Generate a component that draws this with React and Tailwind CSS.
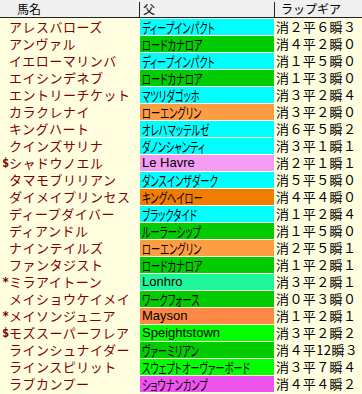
import React from 'react'

const rows = [
  { mark: '', name: 'アレスバローズ', sire: 'ディープインパクト', bg: 'bg-[#00ffff]', lap: '消２平６瞬３' },
  { mark: '', name: 'アンヴァル', sire: 'ロードカナロア', bg: 'bg-[#00cc00]', lap: '消４平２瞬０' },
  { mark: '', name: 'イエローマリンバ', sire: 'ディープインパクト', bg: 'bg-[#00ffff]', lap: '消１平５瞬０' },
  { mark: '', name: 'エイシンデネブ', sire: 'ロードカナロア', bg: 'bg-[#00cc00]', lap: '消１平３瞬０' },
  { mark: '', name: 'エントリーチケット', sire: 'マツリダゴッホ', bg: 'bg-[#00ffff]', lap: '消３平２瞬４' },
  { mark: '', name: 'カラクレナイ', sire: 'ローエングリン', bg: 'bg-[#ff9c44]', lap: '消３平２瞬０' },
  { mark: '', name: 'キングハート', sire: 'オレハマッテルゼ', bg: 'bg-[#00ffff]', lap: '消６平５瞬２' },
  { mark: '', name: 'クインズサリナ', sire: 'ダノンシャンティ', bg: 'bg-[#00ffff]', lap: '消３平１瞬１' },
  { mark: '$', name: 'シャドウノエル', sire: 'Le Havre', bg: 'bg-[#f49cf4]', lap: '消２平１瞬１', latin: true },
  { mark: '', name: 'タマモブリリアン', sire: 'ダンスインザダーク', bg: 'bg-[#00ffff]', lap: '消５平５瞬０' },
  { mark: '', name: 'ダイメイプリンセス', sire: 'キングヘイロー', bg: 'bg-[#f07c00]', lap: '消４平４瞬０' },
  { mark: '', name: 'ディープダイバー', sire: 'ブラックタイド', bg: 'bg-[#00ffff]', lap: '消１平２瞬４' },
  { mark: '', name: 'ディアンドル', sire: 'ルーラーシップ', bg: 'bg-[#00cc00]', lap: '消１平５瞬０' },
  { mark: '', name: 'ナインテイルズ', sire: 'ローエングリン', bg: 'bg-[#ff9c44]', lap: '消２平５瞬１' },
  { mark: '', name: 'ファンタジスト', sire: 'ロードカナロア', bg: 'bg-[#00cc00]', lap: '消１平２瞬１' },
  { mark: '*', name: 'ミラアイトーン', sire: 'Lonhro', bg: 'bg-[#1ef59c]', lap: '消３平２瞬１', latin: true },
  { mark: '', name: 'メイショウケイメイ', sire: 'ワークフォース', bg: 'bg-[#00cc00]', lap: '消０平３瞬０' },
  { mark: '*', name: 'メイソンジュニア', sire: 'Mayson', bg: 'bg-[#ff8844]', lap: '消１平２瞬１', latin: true },
  { mark: '$', name: 'モズスーパーフレア', sire: 'Speightstown', bg: 'bg-[#00ff00]', lap: '消３平２瞬２', latin: true },
  { mark: '', name: 'ラインシュナイダー', sire: 'ヴァーミリアン', bg: 'bg-[#00cc00]', lap: '消４平12瞬３' },
  { mark: '', name: 'ラインスピリット', sire: 'スウェプトオーヴァーボード', bg: 'bg-[#00ff00]', lap: '消３平７瞬４' },
  { mark: '', name: 'ラブカンプー', sire: 'ショウナンカンプ', bg: 'bg-[#ee55ee]', lap: '消４平４瞬２' },
]

const jp = "font-['Noto_Sans_CJK_JP',sans-serif]"

const App = () => {
  return (
    <div className={`w-[362px] h-[394px] bg-[#ffffe0] overflow-hidden ${jp}`}>
      <div className="flex h-[18px] bg-[#f0f0f0] border-b border-[#222] text-[12px] leading-[17px] text-black">
        <div className="w-[139px] pl-[17px]">馬名</div>
        <div className="w-px h-[15px] mt-[2px] bg-[#222]"></div>
        <div className="w-[134px] pl-[3px]">父</div>
        <div className="w-px h-[15px] mt-[2px] bg-[#222]"></div>
        <div className="flex-1 pl-[6px]">ラップギア</div>
      </div>
      {rows.map((r, i) => (
        <div key={i} className="flex h-[17px] items-end">
          <div className="w-[140px] shrink-0 h-[16px] flex items-center text-[#800000] text-[13px] leading-[16px] whitespace-nowrap">
            <span className="w-[9px] shrink-0 pl-[2px] text-[12px] font-['DejaVu_Sans_Mono',monospace] font-bold">{r.mark}</span>
            <span className="tracking-[0.5px]">{r.name}</span>
          </div>
          <div className={`w-[134px] shrink-0 h-[16px] ${r.bg} text-black whitespace-nowrap flex items-center pl-[2px]`}>
            {r.latin ? (
              <span className="text-[13px] leading-[16px] font-['Liberation_Sans',sans-serif]">{r.sire}</span>
            ) : (
              <span className="inline-block text-[14px] leading-[16px] origin-left scale-x-[0.66] [font-feature-settings:'palt']">{r.sire}</span>
            )}
          </div>
          <div className="flex-1 h-[16px] pl-[2px] text-[13px] leading-[16px] text-black whitespace-nowrap tracking-[0.4px]">
            {r.lap}
          </div>
        </div>
      ))}
    </div>
  )
}

export default App
